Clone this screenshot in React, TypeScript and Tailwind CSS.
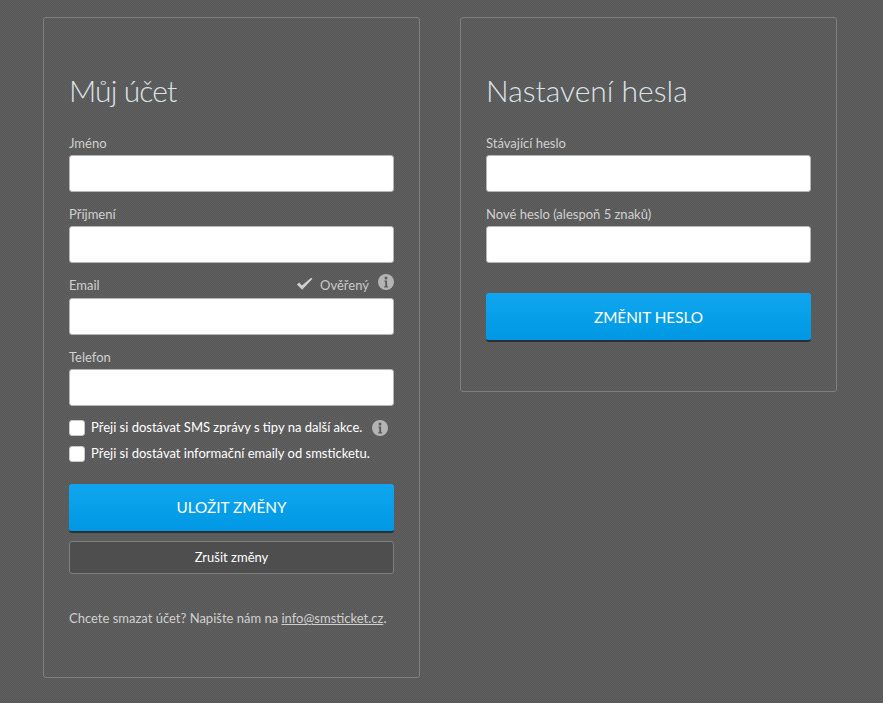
const font = "font-['Lato','Liberation_Sans',sans-serif]";

function Info({ className = "" }: { className?: string }) {
  return (
    <svg viewBox="0 0 16 16" className={`w-4 h-4 ${className}`}>
      <circle cx="8" cy="8" r="8" fill="#b4b4b4" />
      <circle cx="8" cy="4" r="1.5" fill="#5b5b5b" />
      <path d="M6.4 6.6h2.7v5.6h1v1.2H6.2v-1.2h1V7.8h-.8z" fill="#5b5b5b" />
    </svg>
  );
}

function Field({
  label,
  className = "",
  right,
  gap = "mt-[3px]",
}: {
  label: string;
  className?: string;
  right?: React.ReactNode;
  gap?: string;
}) {
  return (
    <div className={className}>
      <div className="flex justify-between items-end h-[17px] text-[13px] leading-[17px] text-[#d0d0d0]">
        <span>{label}</span>
        {right}
      </div>
      <div className={`${gap} h-[37px] rounded-[3px] bg-white border border-[#b5b5b5]`} />
    </div>
  );
}

function Primary({ children, className = "" }: { children: React.ReactNode; className?: string }) {
  return (
    <button
      className={`w-full h-[49px] rounded-[3px] bg-gradient-to-b from-[#10a6ef] to-[#0098e4] border-b-2 border-[#2b2f33] text-white text-[15.3px] ${className}`}
    >
      {children}
    </button>
  );
}

function Check({ label, children }: { label: string; children?: React.ReactNode }) {
  return (
    <div className="flex items-center h-[16px] text-[13px] text-white">
      <span className="w-4 h-4 rounded-[3px] bg-white border border-[#c8c8c8] mr-[6px]" />
      <span>{label}</span>
      {children}
    </div>
  );
}

export default function App() {
  return (
    <div
      className={`min-h-[703px] bg-[repeating-conic-gradient(#585858_0_25%,#5f5f5f_0_50%)] bg-size-[2px_2px] pt-[17px] pl-[43px] flex items-start gap-[40px] ${font}`}
    >
      <section className="w-[377px] h-[661px] border border-[#7f7f7f] rounded-[3px] px-[25px] pt-[53px]">
        <h1 className="text-[30px] leading-[38px] font-light tracking-[-0.9px] text-[#dce3e8]">Můj účet</h1>
        <Field label="Jméno" className="mt-[26px]" />
        <Field label="Příjmení" className="mt-[14px]" />
        <Field
          label="Email"
          className="mt-[14px]"
          gap="mt-[4px]"
          right={
            <span className="flex items-center text-[#c9c9c9]">
              <svg viewBox="0 0 18 14" className="w-[17px] h-[14px] mr-[7px]">
                <path d="M1 7.5l2.5-2 2.8 3L16 .5l1.5 1L6.5 13z" fill="#cfcfcf" />
              </svg>
              <span className="pt-[2px]">Ověřený</span>
              <Info className="ml-[9px] mb-[4px]" />
            </span>
          }
        />
        <Field label="Telefon" className="mt-[14px]" />
        <div className="mt-[14px] flex flex-col gap-[10px]">
          <Check label="Přeji si dostávat SMS zprávy s tipy na další akce.">
            <Info className="ml-[10px]" />
          </Check>
          <Check label="Přeji si dostávat informační emaily od smsticketu." />
        </div>
        <div className="mt-[22px]">
          <Primary>ULOŽIT ZMĚNY</Primary>
        </div>
        <button className="mt-[8px] w-full h-[33px] rounded-[3px] bg-[#4e4e4e] border border-[#7f7f7f] text-white text-[13px]">
          Zrušit změny
        </button>
        <p className="mt-[36px] text-[13px] leading-[17px] text-[#d0d0d0]">
          Chcete smazat účet? Napište nám na <a className="underline">info@smsticket.cz</a>.
        </p>
      </section>
      <section className="w-[377px] h-[375px] border border-[#7f7f7f] rounded-[3px] px-[25px] pt-[53px]">
        <h1 className="text-[30px] leading-[38px] font-light text-[#dce3e8]">Nastavení hesla</h1>
        <Field label="Stávající heslo" className="mt-[26px]" />
        <Field label="Nové heslo (alespoň 5 znaků)" className="mt-[14px]" />
        <div className="mt-[30px]">
          <Primary className="pt-[2px]">ZMĚNIT HESLO</Primary>
        </div>
      </section>
    </div>
  );
}
